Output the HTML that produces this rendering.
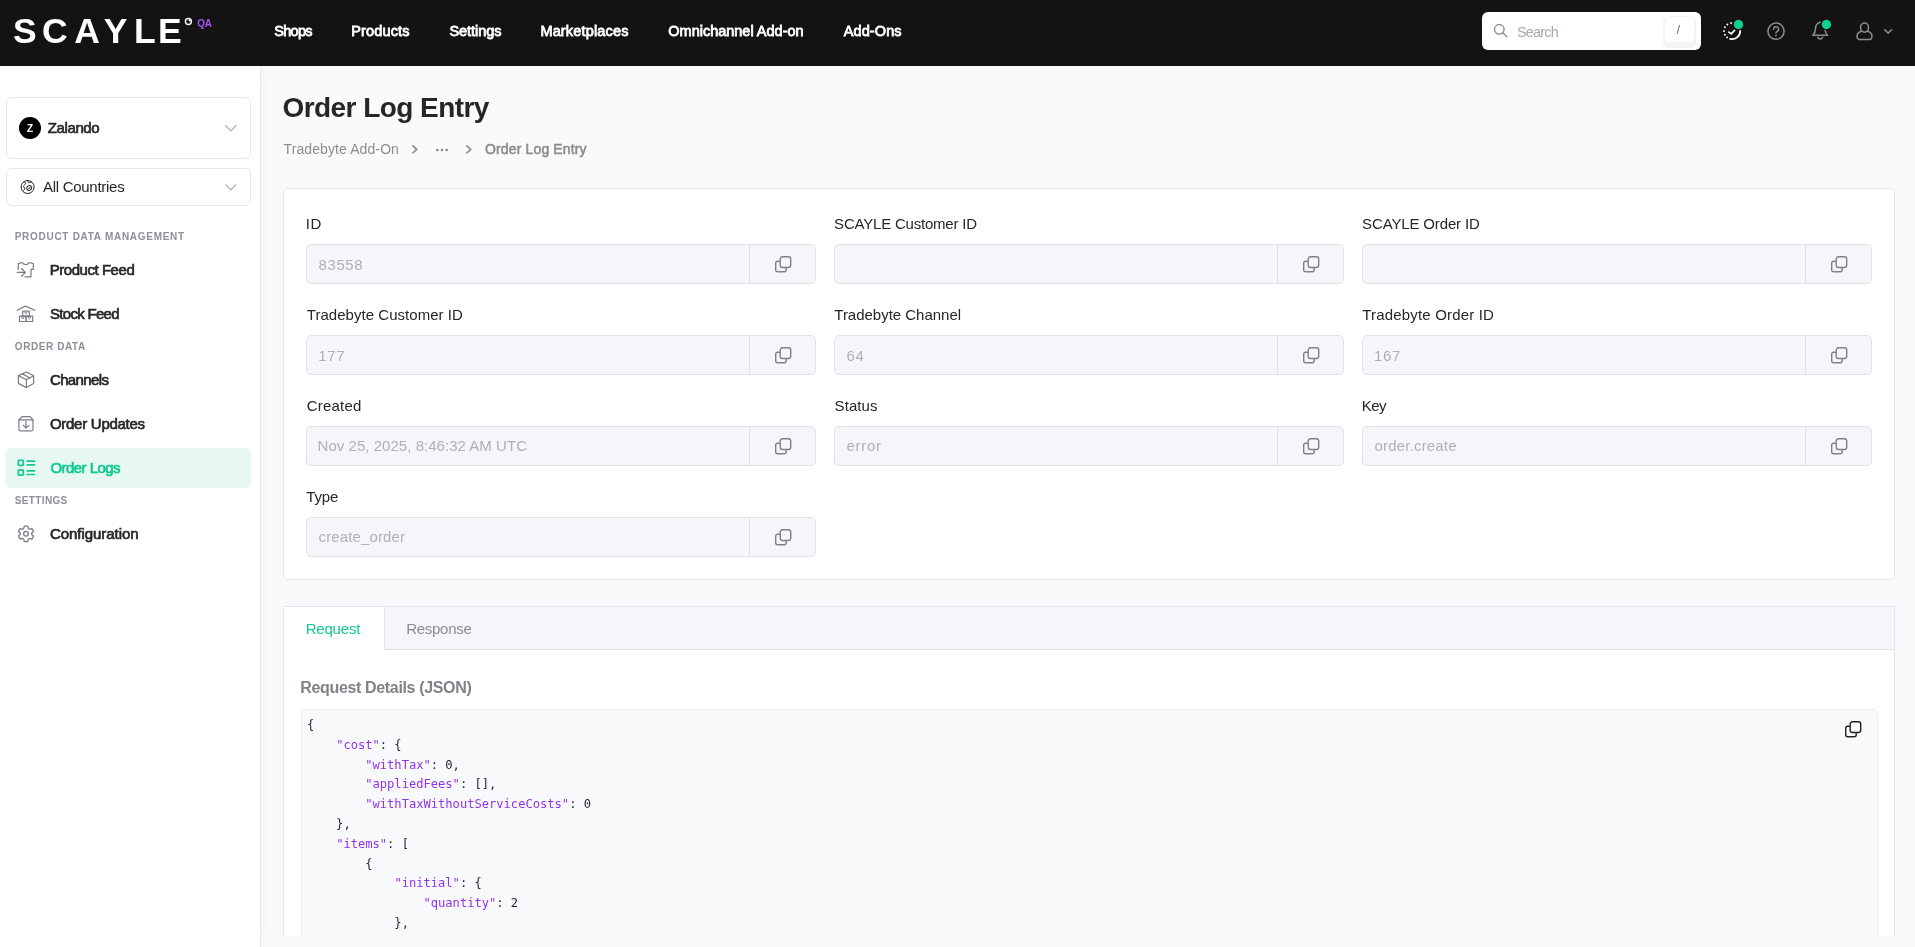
<!DOCTYPE html>
<html lang="en"><head><meta charset="utf-8"><title>Order Log Entry</title>
<style>
*{box-sizing:border-box}
html,body{margin:0;padding:0}
body{-webkit-font-smoothing:antialiased;width:1915px;height:947px;overflow:hidden;background:#f9fafb;position:relative;font-family:"Liberation Sans",sans-serif;}
.abs{position:absolute}
.t{position:absolute;white-space:pre;line-height:20px;font-family:"Liberation Sans",sans-serif;}
svg{position:absolute;overflow:visible}
#header{position:absolute;left:0;top:0;width:1915px;height:66px;background:#131313}
#sidebar{position:absolute;left:0;top:66px;width:261px;height:881px;background:#fff;border-right:1px solid #e5e7eb;box-shadow:0 0 18px rgba(0,0,0,.04)}
.box{position:absolute;background:#fff;border:1px solid #e5e7eb;border-radius:6px}
.card{position:absolute;background:#fff;border:1px solid #e4e6ec;border-radius:5px;box-shadow:0 0 10px rgba(0,0,0,.025)}
.inp{position:absolute;width:510px;height:40px;background:#f5f6fa;border:1px solid #dfe1e9;border-radius:5px}
.inp i{position:absolute;left:442px;top:0;width:1px;height:38px;background:#dfe1e9}
pre{margin:0}
#code{position:absolute;left:307.4px;top:716.4px;font-family:"DejaVu Sans Mono","Liberation Mono",monospace;font-size:12.1px;line-height:19.8px;color:#24292e;white-space:pre}
#code b{font-weight:400;color:#9333ea}

#texts,#code,#logo{will-change:transform}

</style></head>
<body>
<svg width="0" height="0" style="left:0;top:0"><defs>
<symbol id="copy" viewBox="0 0 17 17" overflow="visible">
<path d="M4.9 5.2H2.6A1.9 1.9 0 0 0 .7 7.1v6.7a1.9 1.9 0 0 0 1.9 1.9h6.7a1.9 1.9 0 0 0 1.9-1.9v-2.2" fill="none" stroke="currentColor" stroke-width="1.4"/>
<rect x="5.2" y=".75" width="10.5" height="10.7" rx="2.3" fill="none" stroke="currentColor" stroke-width="1.4"/>
</symbol>
<symbol id="chev" viewBox="0 0 12 7" overflow="visible"><path d="M.6.7 6 6 11.4.7" fill="none" stroke="currentColor" stroke-width="1.1" stroke-linecap="round" stroke-linejoin="round"/></symbol>
</defs></svg>
<div id="header"></div>
<svg id="logo" style="left:0;top:0" width="230" height="66"><text y="43.4" x="13.1 42 74.3 103.8 133.9 158.1" font-family="Liberation Sans, sans-serif" font-weight="700" font-size="35.5" fill="#fff">SCAYLE</text>
<circle cx="188.4" cy="21.5" r="3" fill="none" stroke="#fff" stroke-width="1.4"/><circle cx="189.6" cy="20.4" r="1" fill="#fff"/></svg>
<div class="abs" style="left:1482px;top:12px;width:219px;height:38px;background:#fff;border-radius:6px"></div>
<div class="abs" style="left:1663px;top:16px;width:33px;height:32px;background:#f3f4f6;border-radius:6px"></div>
<div class="abs" style="left:1665px;top:17px;width:29px;height:24.5px;background:#fff;border-radius:4px"></div>
<svg style="left:1493px;top:23px" width="16" height="16"><circle cx="6.3" cy="6.3" r="4.8" fill="none" stroke="#8b9098" stroke-width="1.4"/><path d="M9.8 9.8 13.8 13.8" stroke="#8b9098" stroke-width="1.4" stroke-linecap="round"/></svg>
<svg style="left:1720px;top:18px" width="28" height="26">
<circle cx="7.11" cy="19.38" r="0.95" fill="#fff"/><circle cx="4.88" cy="16.68" r="0.95" fill="#fff"/><circle cx="4.00" cy="13.00" r="0.95" fill="#fff"/><circle cx="4.88" cy="9.32" r="0.95" fill="#fff"/><circle cx="7.34" cy="6.45" r="0.95" fill="#fff"/><circle cx="11.11" cy="4.96" r="0.95" fill="#fff"/>
<path d="M20.20 13.0A8.1 8.1 0 0 1 10.14 20.86" fill="none" stroke="#fff" stroke-width="1.8" stroke-linecap="round"/>
<path d="M8.9 14.1 11.2 15.9 14.6 12.4" fill="none" stroke="#fff" stroke-width="1.7" stroke-linecap="round" stroke-linejoin="round"/>
<circle cx="18.5" cy="6.5" r="5.4" fill="#131313"/><circle cx="18.5" cy="6.5" r="4.7" fill="#10cf93"/></svg>
<svg style="left:1766px;top:21px" width="20" height="20"><circle cx="10" cy="10.2" r="8.1" fill="none" stroke="#8a8d92" stroke-width="1.5"/>
<path d="M7.6 8.2a2.5 2.4 0 1 1 3.6 2.1c-.8.5-1.2.9-1.2 1.8" fill="none" stroke="#8a8d92" stroke-width="1.5" stroke-linecap="round"/><circle cx="10" cy="14.4" r=".95" fill="#8a8d92"/></svg>
<svg style="left:1810px;top:18px" width="26" height="26">
<path d="M10.2 4.3C6.9 5.2 5.4 8 5.4 11.2c0 2.6-.7 4.2-2.6 6.1h14.8c-1.5-1.5-2.3-3-2.5-5" fill="none" stroke="#8a8d92" stroke-width="1.5" stroke-linecap="round" stroke-linejoin="round"/>
<path d="M7.9 19.3a2.4 2.4 0 0 0 4.6 0" fill="none" stroke="#8a8d92" stroke-width="1.5" stroke-linecap="round"/>
<circle cx="16.4" cy="6.5" r="5.4" fill="#131313"/><circle cx="16.4" cy="6.5" r="4.7" fill="#10cf93"/></svg>
<svg style="left:1854px;top:21px" width="22" height="22">
<ellipse cx="10.5" cy="6.6" rx="4" ry="4.6" fill="none" stroke="#8a8d92" stroke-width="1.5"/>
<path d="M7.3 10.2C4.6 11 3 12.6 3 15.2c0 2 1.2 3.4 3.2 3.4h8.6c2 0 3.2-1.4 3.2-3.4 0-2.600-1.600-4.200-4.300-5" fill="none" stroke="#8a8d92" stroke-width="1.5" stroke-linecap="round"/></svg>
<svg style="left:1883.9px;top:28.9px" width="9" height="6"><path d="M.7.7 4.15 4.1 7.6.7" fill="none" stroke="#8a8d92" stroke-width="1.5" stroke-linecap="round" stroke-linejoin="round"/></svg>
<div id="sidebar"></div>
<div class="box" style="left:6px;top:97px;width:245px;height:62px"></div>
<div class="box" style="left:6px;top:168px;width:245px;height:38px"></div>
<div class="abs" style="left:19px;top:117px;width:22px;height:22px;border-radius:50%;background:#000"></div>
<svg style="left:224.900px;top:124.700px;color:#a1a4aa" width="11.600" height="6.800"><use href="#chev" width="11.600" height="6.800"/></svg>
<svg style="left:224.900px;top:183.700px;color:#a1a4aa" width="11.600" height="6.800"><use href="#chev" width="11.600" height="6.800"/></svg>
<svg style="left:20px;top:179px" width="16" height="16"><g fill="none" stroke="#222" stroke-width="1">
<circle cx="7.6" cy="8" r="6.5"/>
<path d="M3.6 3.1c1.300-.3 2.200.5 1.900 1.600-.3 1.100-1.800 1.400-2.200 2.900.9.300 1.700 1.100 1.400 2.300-.2.900-.9 1.500-1.500 1.400"/>
<path d="M7.700 1.600c-.2 1.100.5 1.900 1.800 1.900 1 0 1.700-.3 2.100-.7"/>
<ellipse cx="9.200" cy="9" rx="2.500" ry="2.200" transform="rotate(-35 9.200 9)"/>
<path d="M8.600 10.300c.5-.7.900-1.500 1.500-2.200"/></g></svg>
<div class="abs" style="left:6px;top:448px;width:245px;height:40px;border-radius:5px;background:#e7f8f2"></div>
<svg style="left:16px;top:261px" width="20" height="18"><g fill="none" stroke="#787d86" stroke-width="1.2" stroke-linecap="round" stroke-linejoin="round">
<path d="M2.3 8.400V2.600L6.200 1.500c.5 1.300 1.700 2.100 3.500 2.100s3-.8 3.500-2.100l4.100 1.100V8.400H15v7.400H9"/>
<path d="M1.200 11.400h8.200M5.400 7.500l4 3.900-4 3.900"/></g></svg>
<svg style="left:16px;top:304px" width="20" height="20"><g fill="none" stroke="#787d86" stroke-width="1.2" stroke-linejoin="round">
<path d="M1.200 6.300 9.500 2.100 18.800 6.300" stroke-linecap="round"/>
<rect x="6.700" y="7" width="6.600" height="5.200"/><rect x="3.500" y="12.200" width="6.600" height="5.300"/><rect x="10.100" y="12.200" width="6.600" height="5.300"/>
<path d="M9 7v1.800l1 .7 1-.7V7M5.900 12.200V14l1 .7 1-.7v-1.800M12.400 12.200V14l1 .7 1-.7v-1.800" stroke-width="1"/></g></svg>
<svg style="left:16px;top:370px" width="20" height="20"><g fill="none" stroke="#787d86" stroke-width="1.2" stroke-linejoin="round" stroke-linecap="round">
<path d="M10.300 2 17.600 5.800V13.400L10.300 17.600 2.400 13.400V5.600Z"/><path d="M2.400 5.600 10.400 9.700 17.600 5.800M10.400 9.700V17.600M6.500 3.900 14.200 8"/></g></svg>
<svg style="left:16px;top:414px" width="20" height="20"><g fill="none" stroke="#787d86" stroke-width="1.200" stroke-linejoin="round" stroke-linecap="round">
<path d="M2.900 6v9.300a1.500 1.500 0 0 0 1.500 1.500h11.100a1.500 1.500 0 0 0 1.500-1.500V6L14.200 2.700H6Z"/><path d="M2.900 5.900H17"/><path d="M10 7.200V14M7.100 11.100 10 14.100 12.900 11.100"/></g></svg>
<svg style="left:16px;top:458px" width="20" height="20"><g fill="none" stroke="#10c98f" stroke-width="1.700">
<rect x="2.300" y="2.300" width="5" height="5" rx=".6"/><rect x="2.300" y="12.200" width="5" height="5" rx=".6"/>
<path d="M11.200 3.200h7.300M11.200 6.900h7.300M11.200 12.800h7.300M11.200 16.500h7.300" stroke-linecap="round"/></g></svg>
<svg style="left:16px;top:524px" width="20" height="20"><g fill="none" stroke="#787d86" stroke-width="1.300" stroke-linejoin="round">
<path d="M7.62 4.62 L8.35 2.07 L11.65 2.07 L12.38 4.62 L13.30 5.15 L15.87 4.51 L17.51 7.36 L15.68 9.27 L15.68 10.33 L17.51 12.24 L15.87 15.09 L13.30 14.45 L12.38 14.98 L11.65 17.53 L8.35 17.53 L7.62 14.98 L6.70 14.45 L4.13 15.09 L2.49 12.24 L4.32 10.33 L4.32 9.27 L2.49 7.36 L4.13 4.51 L6.70 5.15Z"/><circle cx="10" cy="9.800" r="2.350"/></g></svg>
<svg style="left:412.4px;top:144.6px" width="6" height="9"><path d="M.8.800 4.800 4.400.8 8" fill="none" stroke="#8c8c8c" stroke-width="1.600" stroke-linecap="round" stroke-linejoin="round"/></svg>
<svg style="left:465.7px;top:144.6px" width="6" height="9"><path d="M.8.800 4.800 4.400.8 8" fill="none" stroke="#8c8c8c" stroke-width="1.600" stroke-linecap="round" stroke-linejoin="round"/></svg>
<svg style="left:435px;top:148px" width="14" height="4"><circle cx="2.300" cy="1.900" r="1.250" fill="#858585"/><circle cx="7" cy="1.900" r="1.250" fill="#858585"/><circle cx="11.700" cy="1.900" r="1.250" fill="#858585"/></svg>
<div class="card" style="left:283px;top:188px;width:1612px;height:392px"></div>
<div class="inp" style="left:306px;top:244px"><i></i></div>
<svg style="left:774.6px;top:256.1px;color:#7d8087" width="17" height="17"><use href="#copy" width="17" height="17"/></svg>
<div class="inp" style="left:834px;top:244px"><i></i></div>
<svg style="left:1302.6px;top:256.1px;color:#7d8087" width="17" height="17"><use href="#copy" width="17" height="17"/></svg>
<div class="inp" style="left:1362px;top:244px"><i></i></div>
<svg style="left:1830.6px;top:256.1px;color:#7d8087" width="17" height="17"><use href="#copy" width="17" height="17"/></svg>
<div class="inp" style="left:306px;top:335px"><i></i></div>
<svg style="left:774.6px;top:347.1px;color:#7d8087" width="17" height="17"><use href="#copy" width="17" height="17"/></svg>
<div class="inp" style="left:834px;top:335px"><i></i></div>
<svg style="left:1302.6px;top:347.1px;color:#7d8087" width="17" height="17"><use href="#copy" width="17" height="17"/></svg>
<div class="inp" style="left:1362px;top:335px"><i></i></div>
<svg style="left:1830.6px;top:347.1px;color:#7d8087" width="17" height="17"><use href="#copy" width="17" height="17"/></svg>
<div class="inp" style="left:306px;top:426px"><i></i></div>
<svg style="left:774.6px;top:438.1px;color:#7d8087" width="17" height="17"><use href="#copy" width="17" height="17"/></svg>
<div class="inp" style="left:834px;top:426px"><i></i></div>
<svg style="left:1302.6px;top:438.1px;color:#7d8087" width="17" height="17"><use href="#copy" width="17" height="17"/></svg>
<div class="inp" style="left:1362px;top:426px"><i></i></div>
<svg style="left:1830.6px;top:438.1px;color:#7d8087" width="17" height="17"><use href="#copy" width="17" height="17"/></svg>
<div class="inp" style="left:306px;top:517px"><i></i></div>
<svg style="left:774.6px;top:529.1px;color:#7d8087" width="17" height="17"><use href="#copy" width="17" height="17"/></svg>
<div class="card" style="left:283px;top:606px;width:1612px;height:400px;border-radius:1px 1px 0 0"></div>
<div class="abs" style="left:384px;top:607px;width:1510px;height:43px;background:#f5f6fa;border-left:1px solid #e0e2ea;border-bottom:1px solid #e0e2ea"></div>
<div class="abs" style="left:301px;top:709px;width:1577px;height:300px;background:#f8f9fb;border:1px solid #ebedf1;border-radius:4px"></div>
<svg style="left:1844.5px;top:720.6px;color:#222" width="17" height="17"><use href="#copy" width="17" height="17"/></svg>
<pre id="code">{
    <b>"cost"</b>: {
        <b>"withTax"</b>: 0,
        <b>"appliedFees"</b>: [],
        <b>"withTaxWithoutServiceCosts"</b>: 0
    },
    <b>"items"</b>: [
        {
            <b>"initial"</b>: {
                <b>"quantity"</b>: 2
            },</pre>
<div class="abs" style="left:261px;top:936px;width:1654px;height:11px;background:#f9fafb"></div>
<div id="texts">
<span class="t" style="left:274.30px;top:20.70px;font-size:14.5px;font-weight:400;color:#fff;letter-spacing:-0.716px;-webkit-text-stroke:.8px;">Shops</span>
<span class="t" style="left:351.30px;top:20.70px;font-size:14.5px;font-weight:400;color:#fff;letter-spacing:0.147px;-webkit-text-stroke:.8px;">Products</span>
<span class="t" style="left:449.40px;top:20.70px;font-size:14.5px;font-weight:400;color:#fff;letter-spacing:-0.049px;-webkit-text-stroke:.8px;">Settings</span>
<span class="t" style="left:540.40px;top:20.70px;font-size:14.5px;font-weight:400;color:#fff;letter-spacing:0.166px;-webkit-text-stroke:.8px;">Marketplaces</span>
<span class="t" style="left:668.30px;top:20.70px;font-size:14.5px;font-weight:400;color:#fff;letter-spacing:-0.009px;-webkit-text-stroke:.8px;">Omnichannel Add-on</span>
<span class="t" style="left:843.80px;top:20.70px;font-size:14.5px;font-weight:400;color:#fff;letter-spacing:0.088px;-webkit-text-stroke:.8px;">Add-Ons</span>
<span class="t" style="left:1517.00px;top:22.00px;font-size:14.3px;font-weight:400;color:#a3a7ae;letter-spacing:-0.730px;">Search</span>
<span class="t" style="left:1676.60px;top:19.80px;font-size:13px;font-weight:400;color:#6b7280;letter-spacing:0.000px;">/</span>
<span class="t" style="left:197.30px;top:13.50px;font-size:10px;font-weight:700;color:#a855f7;letter-spacing:-0.378px;">QA</span>
<span class="t" style="left:27.10px;top:119.10px;font-size:10px;font-weight:700;color:#fff;letter-spacing:0.000px;">Z</span>
<span class="t" style="left:47.80px;top:118.10px;font-size:15px;font-weight:400;color:#262626;letter-spacing:-0.394px;-webkit-text-stroke:.65px;">Zalando</span>
<span class="t" style="left:42.90px;top:176.60px;font-size:15px;font-weight:400;color:#262626;letter-spacing:-0.270px;">All Countries</span>
<span class="t" style="left:14.70px;top:227.10px;font-size:10px;font-weight:700;color:#8b8f97;letter-spacing:0.716px;">PRODUCT DATA MANAGEMENT</span>
<span class="t" style="left:49.65px;top:260.00px;font-size:15px;font-weight:400;color:#262626;letter-spacing:-0.451px;-webkit-text-stroke:.65px;">Product Feed</span>
<span class="t" style="left:50.00px;top:303.80px;font-size:15px;font-weight:400;color:#262626;letter-spacing:-0.703px;-webkit-text-stroke:.65px;">Stock Feed</span>
<span class="t" style="left:14.80px;top:336.90px;font-size:10px;font-weight:700;color:#8b8f97;letter-spacing:0.582px;">ORDER DATA</span>
<span class="t" style="left:49.90px;top:369.70px;font-size:15px;font-weight:400;color:#262626;letter-spacing:-0.597px;-webkit-text-stroke:.65px;">Channels</span>
<span class="t" style="left:49.90px;top:413.90px;font-size:15px;font-weight:400;color:#262626;letter-spacing:-0.265px;-webkit-text-stroke:.65px;">Order Updates</span>
<span class="t" style="left:50.50px;top:457.50px;font-size:15px;font-weight:400;color:#10c98f;letter-spacing:-0.560px;-webkit-text-stroke:.65px;">Order Logs</span>
<span class="t" style="left:14.80px;top:490.90px;font-size:10px;font-weight:700;color:#8b8f97;letter-spacing:0.352px;">SETTINGS</span>
<span class="t" style="left:49.90px;top:523.60px;font-size:15px;font-weight:400;color:#262626;letter-spacing:-0.040px;-webkit-text-stroke:.65px;">Configuration</span>
<span class="t" style="left:282.50px;top:98.20px;font-size:28px;font-weight:700;color:#262626;letter-spacing:-0.558px;line-height:20px;">Order Log Entry</span>
<span class="t" style="left:283.50px;top:138.90px;font-size:14px;font-weight:400;color:#8c8c8c;letter-spacing:0.102px;">Tradebyte Add-On</span>
<span class="t" style="left:485.00px;top:138.90px;font-size:14px;font-weight:400;color:#8c8c8c;letter-spacing:0.143px;-webkit-text-stroke:.55px;">Order Log Entry</span>
<span class="t" style="left:305.80px;top:213.60px;font-size:15px;font-weight:400;color:#262626;letter-spacing:0.633px;">ID</span>
<span class="t" style="left:834.10px;top:213.60px;font-size:15px;font-weight:400;color:#262626;letter-spacing:-0.206px;">SCAYLE Customer ID</span>
<span class="t" style="left:1362.10px;top:213.60px;font-size:15px;font-weight:400;color:#262626;letter-spacing:-0.145px;">SCAYLE Order ID</span>
<span class="t" style="left:306.80px;top:304.60px;font-size:15px;font-weight:400;color:#262626;letter-spacing:0.035px;">Tradebyte Customer ID</span>
<span class="t" style="left:834.30px;top:304.60px;font-size:15px;font-weight:400;color:#262626;letter-spacing:-0.018px;">Tradebyte Channel</span>
<span class="t" style="left:1362.30px;top:304.60px;font-size:15px;font-weight:400;color:#262626;letter-spacing:0.169px;">Tradebyte Order ID</span>
<span class="t" style="left:306.80px;top:395.60px;font-size:15px;font-weight:400;color:#262626;letter-spacing:0.196px;">Created</span>
<span class="t" style="left:834.60px;top:395.60px;font-size:15px;font-weight:400;color:#262626;letter-spacing:0.075px;">Status</span>
<span class="t" style="left:1361.80px;top:395.60px;font-size:15px;font-weight:400;color:#262626;letter-spacing:-0.574px;">Key</span>
<span class="t" style="left:306.30px;top:486.60px;font-size:15px;font-weight:400;color:#262626;letter-spacing:-0.159px;">Type</span>
<span class="t" style="left:318.60px;top:254.70px;font-size:15px;font-weight:400;color:#adb0b6;letter-spacing:0.558px;">83558</span>
<span class="t" style="left:318.20px;top:345.70px;font-size:15px;font-weight:400;color:#adb0b6;letter-spacing:0.658px;">177</span>
<span class="t" style="left:846.60px;top:345.70px;font-size:15px;font-weight:400;color:#adb0b6;letter-spacing:0.558px;">64</span>
<span class="t" style="left:1373.90px;top:345.80px;font-size:15px;font-weight:400;color:#adb0b6;letter-spacing:0.758px;">167</span>
<span class="t" style="left:317.60px;top:435.80px;font-size:15px;font-weight:400;color:#adb0b6;letter-spacing:0.035px;">Nov 25, 2025, 8:46:32 AM UTC</span>
<span class="t" style="left:846.60px;top:436.20px;font-size:15px;font-weight:400;color:#adb0b6;letter-spacing:0.681px;">error</span>
<span class="t" style="left:1374.60px;top:436.20px;font-size:15px;font-weight:400;color:#adb0b6;letter-spacing:0.172px;">order.create</span>
<span class="t" style="left:318.60px;top:527.10px;font-size:15px;font-weight:400;color:#adb0b6;letter-spacing:0.122px;">create_order</span>
<span class="t" style="left:305.70px;top:619.00px;font-size:15px;font-weight:400;color:#10c98f;letter-spacing:-0.200px;">Request</span>
<span class="t" style="left:406.30px;top:619.00px;font-size:15px;font-weight:400;color:#8c8c8c;letter-spacing:-0.300px;">Response</span>
<span class="t" style="left:300.30px;top:677.90px;font-size:16px;font-weight:700;color:#7f8388;letter-spacing:-0.347px;">Request Details (JSON)</span>
</div>
</body></html>
